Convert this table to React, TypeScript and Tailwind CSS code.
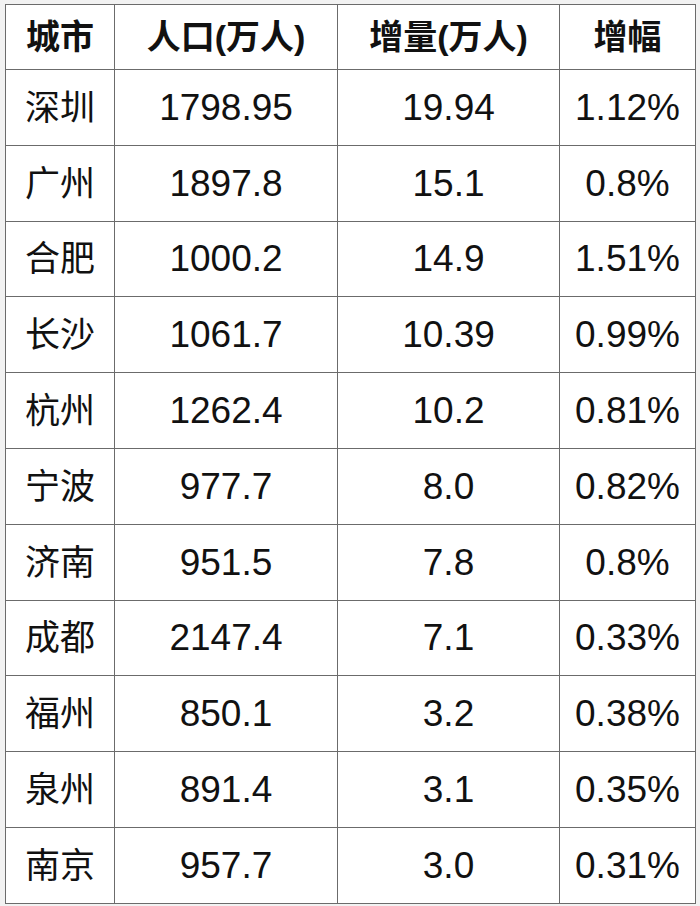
const rows: Array<[string, string, string, string]> = [
  ["深圳", "1798.95", "19.94", "1.12%"],
  ["广州", "1897.8", "15.1", "0.8%"],
  ["合肥", "1000.2", "14.9", "1.51%"],
  ["长沙", "1061.7", "10.39", "0.99%"],
  ["杭州", "1262.4", "10.2", "0.81%"],
  ["宁波", "977.7", "8.0", "0.82%"],
  ["济南", "951.5", "7.8", "0.8%"],
  ["成都", "2147.4", "7.1", "0.33%"],
  ["福州", "850.1", "3.2", "0.38%"],
  ["泉州", "891.4", "3.1", "0.35%"],
  ["南京", "957.7", "3.0", "0.31%"],
];

const headers = ["城市", "人口(万人)", "增量(万人)", "增幅"];

export default function App() {
  return (
    <div
      className="w-[700px] h-[906px] bg-[#f2f2f2] pt-[4px] pl-[5px] text-[#111]"
      style={{ fontFamily: '"Liberation Sans", "Noto Sans CJK SC", sans-serif' }}
    >
      <table className="table-fixed border-collapse bg-white w-[690px]">
        <colgroup>
          <col className="w-[109px]" />
          <col className="w-[223px]" />
          <col className="w-[222px]" />
          <col className="w-[136px]" />
        </colgroup>
        <thead>
          <tr className="h-[65px]">
            {headers.map((h) => (
              <th
                key={h}
                className="border border-[#6b6b6b] p-0 text-center text-[34px] font-bold leading-none"
              >
                {h}
              </th>
            ))}
          </tr>
        </thead>
        <tbody>
          {rows.map((r) => (
            <tr key={r[0]} className="h-[75.8px]">
              {r.map((cell, i) => (
                <td
                  key={i}
                  className={`border border-[#6b6b6b] p-0 text-center leading-none ${
                    i === 0 ? "text-[35px]" : "text-[37px]"
                  }`}
                >
                  {cell}
                </td>
              ))}
            </tr>
          ))}
        </tbody>
      </table>
    </div>
  );
}
